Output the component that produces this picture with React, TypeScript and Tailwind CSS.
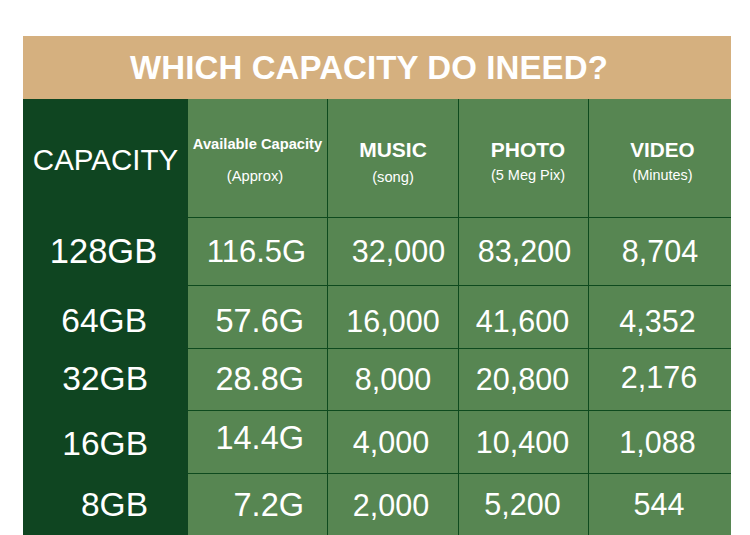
import React from "react";

type Cell = { t: string; c: string };

const rows: { cap: Cell; vals: Cell[] }[] = [
  {
    cap: { t: "128GB", c: "justify-center pr-[4px] text-[34.5px]" },
    vals: [
      { t: "116.5G", c: "justify-center pr-[2px] text-[31px]" },
      { t: "32,000", c: "justify-center pl-[11px]" },
      { t: "83,200", c: "justify-center pl-[2px]" },
      { t: "8,704", c: "justify-center" },
    ],
  },
  {
    cap: { t: "64GB", c: "justify-end pr-[41px] pt-[8px]" },
    vals: [
      { t: "57.6G", c: "justify-end pr-[23px] pt-[8px] text-[32.5px]" },
      { t: "16,000", c: "justify-center pt-[8px]" },
      { t: "41,600", c: "justify-center pr-[2px] pt-[8px]" },
      { t: "4,352", c: "justify-center pr-[5px] pt-[8px]" },
    ],
  },
  {
    cap: { t: "32GB", c: "justify-end pr-[40px]" },
    vals: [
      { t: "28.8G", c: "justify-end pr-[23px] text-[32.5px]" },
      { t: "8,000", c: "justify-center" },
      { t: "20,800", c: "justify-center pr-[2px]" },
      { t: "2,176", c: "justify-center pr-[2px] pb-[4px]" },
    ],
  },
  {
    cap: { t: "16GB", c: "justify-end pr-[40px] pt-[4px]" },
    vals: [
      { t: "14.4G", c: "justify-end pr-[23px] pb-[7px] text-[32.5px]" },
      { t: "4,000", c: "justify-center pr-[4px]" },
      { t: "10,400", c: "justify-center pr-[2px]" },
      { t: "1,088", c: "justify-center pr-[5px]" },
    ],
  },
  {
    cap: { t: "8GB", c: "justify-end pr-[40px] pt-[2px]" },
    vals: [
      { t: "7.2G", c: "justify-end pr-[23px] pt-[1px] text-[32.5px]" },
      { t: "2,000", c: "justify-center pr-[4px] pt-[2px]" },
      { t: "5,200", c: "justify-center pr-[2px]" },
      { t: "544", c: "justify-center pr-[2px]" },
    ],
  },
];

export default function App() {
  return (
    <div className="w-[750px] h-[535px] overflow-hidden bg-white pt-[36px] pl-[23px] font-['Liberation_Sans',Arial,sans-serif] text-white">
      <div className="w-[708px] h-[63px] bg-[#d5b07f] flex items-center justify-center pr-[16px]">
        <span className="text-[33px] font-bold leading-none tracking-[0.1px]">
          WHICH CAPACITY DO INEED?
        </span>
      </div>
      <div className="w-[708px] grid grid-cols-[165px_139px_131px_130px_143px] grid-rows-[118px_68px_63px_62px_63px_62px]">
        {/* header row */}
        <div className="bg-[#0f4521] flex items-center justify-center pt-[4px]">
          <span className="text-[29.5px] leading-none">CAPACITY</span>
        </div>
        <div className="bg-[#578652] flex flex-col items-center pt-[38px]">
          <span className="text-[14.7px] font-bold leading-none">Available Capacity</span>
          <span className="text-[14.7px] leading-none mt-[17px] mr-[5px]">(Approx)</span>
        </div>
        <div className="bg-[#578652] border-l border-[#0e4a1e] flex flex-col items-center pt-[40px]">
          <span className="text-[21px] font-bold leading-none">MUSIC</span>
          <span className="text-[14.7px] leading-none mt-[9.5px]">(song)</span>
        </div>
        <div className="bg-[#578652] border-l border-[#0e4a1e] flex flex-col items-center pt-[40px] pl-[9px]">
          <span className="text-[21px] font-bold leading-none">PHOTO</span>
          <span className="text-[14.5px] leading-none mt-[8px]">(5 Meg Pix)</span>
        </div>
        <div className="bg-[#578652] border-l border-[#0e4a1e] flex flex-col items-center pt-[41px] pl-[5px]">
          <span className="text-[20.7px] font-bold leading-none">VIDEO</span>
          <span className="text-[14.4px] leading-none mt-[7.5px]">(Minutes)</span>
        </div>

        {rows.map((r) => (
          <React.Fragment key={r.cap.t}>
            <div className={`bg-[#0f4521] flex items-center text-[33.5px] leading-none ${r.cap.c}`}>
              <span>{r.cap.t}</span>
            </div>
            {r.vals.map((v, i) => (
              <div
                key={v.t}
                className={`bg-[#578652] border-t border-[#0e4a1e] flex items-center text-[30.5px] leading-none ${
                  i > 0 ? "border-l" : ""
                } ${v.c}`}
              >
                <span>{v.t}</span>
              </div>
            ))}
          </React.Fragment>
        ))}
      </div>
    </div>
  );
}
